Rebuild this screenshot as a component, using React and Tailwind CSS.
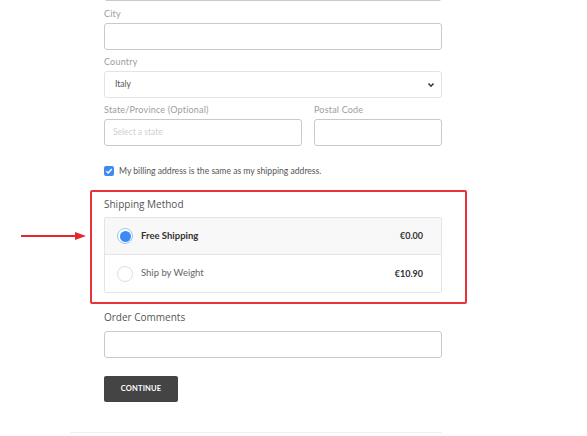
import React from "react";

const body = { fontFamily: "Lato, 'Open Sans', sans-serif" };
const head = { fontFamily: "'Open Sans', 'Noto Sans', sans-serif" };

function Label({ children }) {
  return (
    <div className="text-[9px] leading-[12px] text-[#9d9d9d] mb-[3px] tracking-[0.2px]">
      {children}
    </div>
  );
}

function Input({ className = "", children }) {
  return (
    <div
      className={
        "h-[27px] rounded-[3px] border border-[#c9c9c9] bg-white flex items-center " +
        className
      }
    >
      {children}
    </div>
  );
}

export default function App() {
  return (
    <div className="relative w-[587px] h-[436px] bg-white overflow-hidden" style={body}>
      {/* annotation arrow */}
      <svg
        className="absolute left-[21px] top-[231px]"
        width="66"
        height="10"
        viewBox="0 0 66 10"
      >
        <line x1="0" y1="5" x2="56" y2="5" stroke="#e5262d" strokeWidth="2" />
        <polygon points="54,1 65,5 54,9" fill="#e5262d" />
      </svg>

      <div className="ml-[104px] w-[338px] flex flex-col">
        {/* previous input, cut off at top */}
        <div className="-mt-[26px] h-[27px] rounded-[3px] border border-[#c9c9c9]" />

        <div className="mt-[7px]">
          <Label>City</Label>
          <Input />
        </div>

        <div className="mt-[6px]">
          <Label>Country</Label>
          <div className="h-[27px] rounded-[3px] border border-[#e3e3e3] bg-white flex items-center justify-between pl-[10px] pr-[6px]">
            <span className="text-[8.5px] text-[#555]">Italy</span>
            <svg width="8" height="6" viewBox="0 0 8 6">
              <path d="M1.5 1.5 L4 4.2 L6.5 1.5" fill="none" stroke="#333" strokeWidth="1.5" />
            </svg>
          </div>
        </div>

        <div className="mt-[6px] flex gap-[12px]">
          <div className="w-[198px]">
            <Label>State/Province (Optional)</Label>
            <Input className="pl-[8px]">
              <span className="text-[8.5px] text-[#d0d0d0]">Select a state</span>
            </Input>
          </div>
          <div className="flex-1">
            <Label>Postal Code</Label>
            <Input />
          </div>
        </div>

        <div className="mt-[19px] flex items-center gap-[5px] h-[12px]">
          <div className="w-[10px] h-[10px] rounded-[2px] bg-[#3d8bf2] flex items-center justify-center">
            <svg width="8" height="8" viewBox="0 0 8 8">
              <path d="M1.3 4.2 L3.2 6 L6.8 2" fill="none" stroke="#fff" strokeWidth="1.4" />
            </svg>
          </div>
          <span className="text-[8.6px] text-[#555]">
            My billing address is the same as my shipping address.
          </span>
        </div>

        {/* shipping method, highlighted with red annotation box */}
        <div className="mt-[13px] -ml-[14px] w-[377px] border-2 border-[#e8333a] rounded-[2px] pl-[12px] pt-[5px] pb-[9px]">
          <div className="text-[10px] leading-[14px] text-[#555]" style={head}>
            Shipping Method
          </div>
          <div className="mt-[6px] w-[338px] border border-[#e4e4e4] rounded-[2px]">
            <div className="h-[37px] bg-[#f8f8f8] border-b border-[#e4e4e4] flex items-center pl-[12px] pr-[18px]">
              <div className="w-[16px] h-[16px] rounded-full border border-[#9ec2f3] bg-white p-[1.5px]">
                <div className="w-full h-full rounded-full bg-[#3d8bf2]" />
              </div>
              <span className="ml-[8px] text-[9.5px] font-bold text-[#333]">Free Shipping</span>
              <span className="ml-auto text-[9px] font-bold text-[#333]">€0.00</span>
            </div>
            <div className="h-[37px] bg-white flex items-center pl-[12px] pr-[18px]">
              <div className="w-[16px] h-[16px] rounded-full border border-[#dedede] bg-white" />
              <span className="ml-[8px] text-[9.5px] text-[#666]">Ship by Weight</span>
              <span className="ml-auto text-[9px] font-bold text-[#333]">€10.90</span>
            </div>
          </div>
        </div>

        <div className="mt-[6px] text-[10px] leading-[14px] text-[#555]" style={head}>
          Order Comments
        </div>
        <Input className="mt-[7px]" />

        <button className="mt-[18px] w-[74px] h-[26px] rounded-[2px] bg-[#444444] text-white text-[7.5px] font-bold tracking-[0.2px] flex items-center justify-center">
          CONTINUE
        </button>

        <div className="mt-[30px] -ml-[34px] w-[372px] h-px bg-[#eeeeee]" />
      </div>
    </div>
  );
}
